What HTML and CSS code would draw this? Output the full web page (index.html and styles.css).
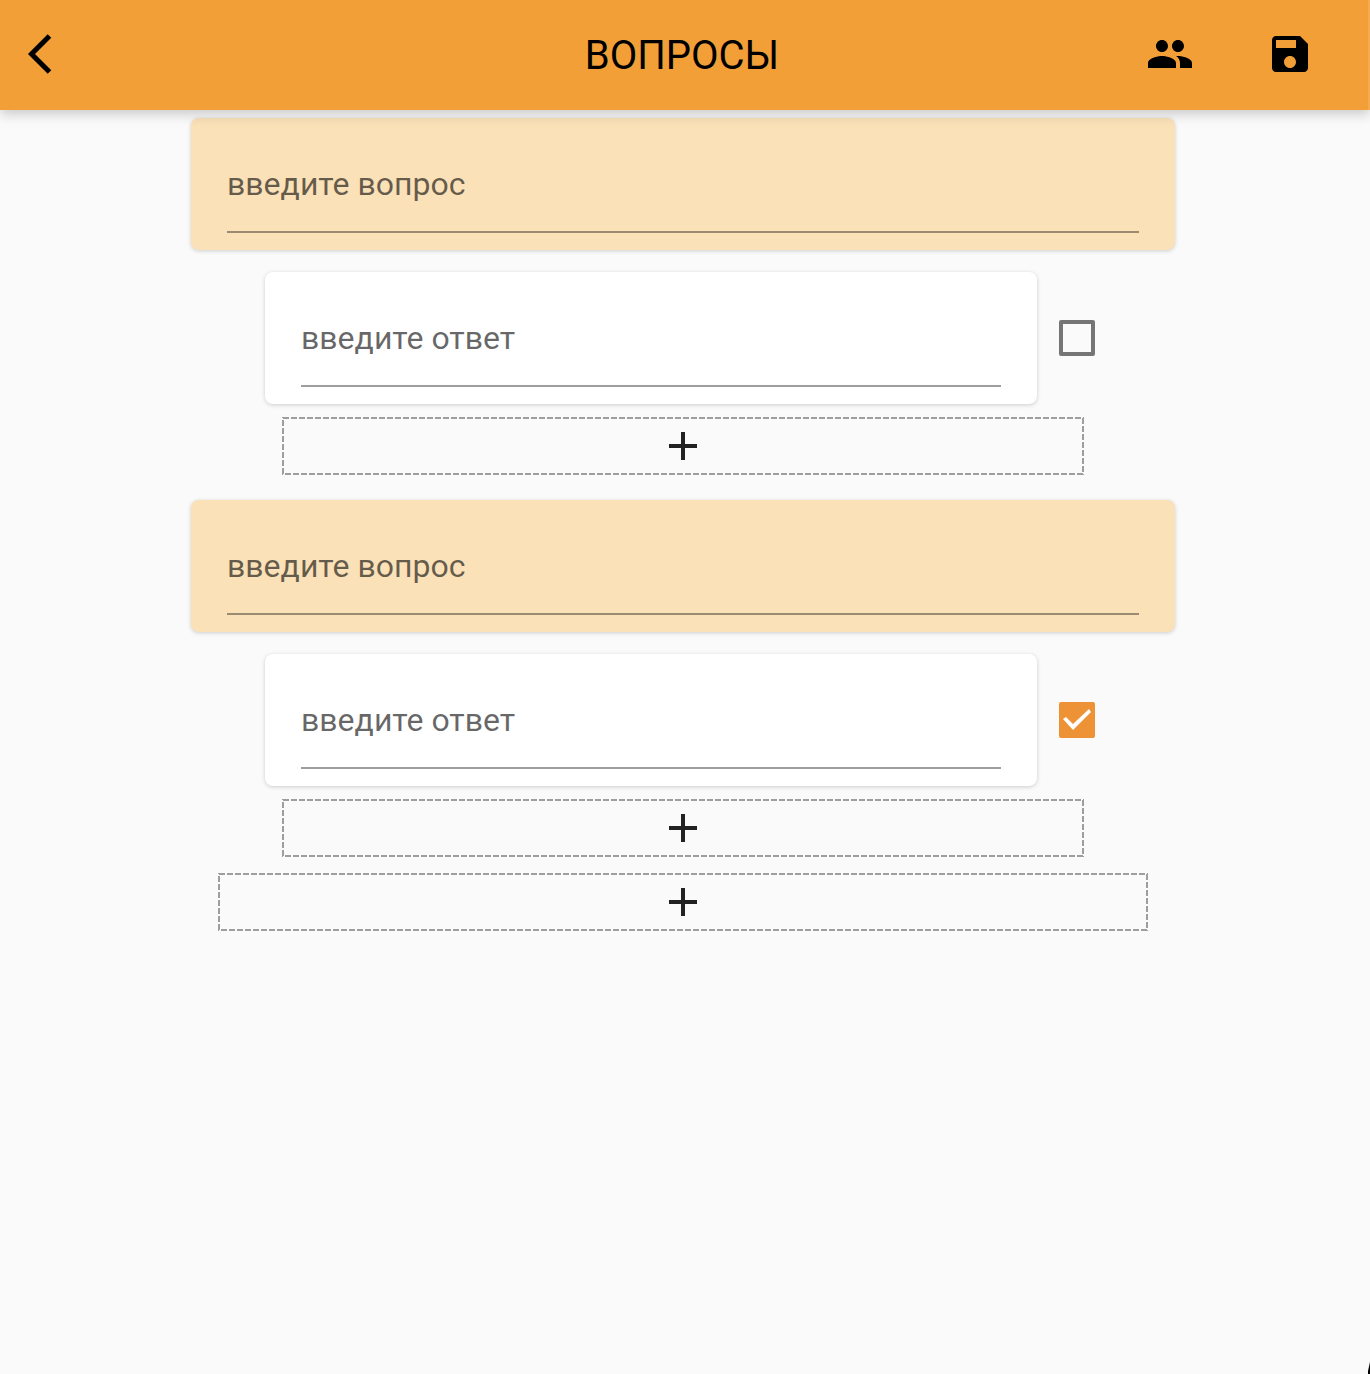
FILE: index.html
```html
<!DOCTYPE html>
<html lang="ru">
<head>
  <meta charset="utf-8">
  <meta name="viewport" content="width=device-width, initial-scale=1">
  <title>Вопросы</title>
  <link rel="stylesheet" href="styles.css">
</head>
<body>
  <header class="app-bar">
    <button class="icon-button back" type="button" aria-label="Назад">
      <svg class="icon" viewBox="0 0 48 48" aria-hidden="true"><path d="M33.5 6 15.5 24l18 18" fill="none" stroke="currentColor" stroke-width="5"/></svg>
    </button>
    <h1 class="title">ВОПРОСЫ</h1>
    <div class="actions">
      <button class="icon-button" type="button" aria-label="Участники">
        <svg class="icon" viewBox="0 0 24 24" fill="currentColor" aria-hidden="true"><path d="M16 11c1.66 0 2.99-1.34 2.99-3S17.66 5 16 5c-1.66 0-3 1.34-3 3s1.34 3 3 3zm-8 0c1.66 0 2.99-1.34 2.99-3S9.66 5 8 5C6.34 5 5 6.34 5 8s1.34 3 3 3zm0 2c-2.33 0-7 1.17-7 3.5V19h14v-2.500c0-2.330-4.670-3.500-7-3.500zm8 0c-.29 0-.62.02-.97.05 1.160.84 1.970 1.970 1.970 3.450V19h6v-2.500c0-2.330-4.670-3.500-7-3.500z"/></svg>
      </button>
      <button class="icon-button" type="button" aria-label="Сохранить">
        <svg class="icon" viewBox="0 0 24 24" fill="currentColor" aria-hidden="true"><path d="M17 3H5c-1.110 0-2 .9-2 2v14c0 1.100.89 2 2 2h14c1.100 0 2-.9 2-2V7l-4-4zm-5 16c-1.660 0-3-1.340-3-3s1.340-3 3-3 3 1.340 3 3-1.340 3-3 3zm3-10H5V5h10v4z"/></svg>
      </button>
    </div>
  </header>

  <main class="page">
    <form class="questions">
      <section class="question">
        <div class="card card-question">
          <input class="field" type="text" placeholder="введите вопрос" aria-label="Вопрос 1">
        </div>
        <div class="answer">
          <div class="card">
            <input class="field" type="text" placeholder="введите ответ" aria-label="Ответ на вопрос 1">
          </div>
          <input class="check" type="checkbox" aria-label="Верный ответ на вопрос 1">
        </div>
        <button class="add add-answer" type="button" aria-label="Добавить ответ">
          <svg class="icon" viewBox="0 0 24 24" fill="currentColor" aria-hidden="true"><path d="M19 13h-6v6h-2v-6H5v-2h6V5h2v6h6v2z"/></svg>
        </button>
      </section>

      <section class="question">
        <div class="card card-question">
          <input class="field" type="text" placeholder="введите вопрос" aria-label="Вопрос 2">
        </div>
        <div class="answer">
          <div class="card">
            <input class="field" type="text" placeholder="введите ответ" aria-label="Ответ на вопрос 2">
          </div>
          <input class="check" type="checkbox" checked aria-label="Верный ответ на вопрос 2">
        </div>
        <button class="add add-answer" type="button" aria-label="Добавить ответ">
          <svg class="icon" viewBox="0 0 24 24" fill="currentColor" aria-hidden="true"><path d="M19 13h-6v6h-2v-6H5v-2h6V5h2v6h6v2z"/></svg>
        </button>
      </section>

      <button class="add add-question" type="button" aria-label="Добавить вопрос">
        <svg class="icon" viewBox="0 0 24 24" fill="currentColor" aria-hidden="true"><path d="M19 13h-6v6h-2v-6H5v-2h6V5h2v6h6v2z"/></svg>
      </button>
    </form>
  </main>
  <svg class="corner" viewBox="0 0 2 12" aria-hidden="true"><path d="M2 0v12H0V9z"/></svg>
</body>
</html>
```

FILE: styles.css
```css
* {
  box-sizing: border-box;
}

body {
  margin: 0;
  min-height: 100vh;
  background: #fafafa;
  font-family: Roboto, sans-serif;
  color: #000;
}

button {
  padding: 0;
  border: 0;
  background: none;
  color: inherit;
  cursor: pointer;
}

.icon {
  display: block;
  width: 48px;
  height: 48px;
}

/* App bar */
.app-bar {
  position: relative;
  z-index: 1;
  display: grid;
  grid-template-columns: 1fr auto 1fr;
  align-items: center;
  height: 110px;
  padding: 0 4px 2px 0;
  border-right: 2px solid #f4ab52;
  background: #f29f38;
  box-shadow: 0 4px 12px rgba(0, 0, 0, 0.2);
}

.icon-button {
  display: grid;
  place-items: center;
  width: 96px;
  height: 96px;
}

.back {
  width: 80px;
}

.title {
  margin: 0;
  padding-top: 4px;
  font-size: 40px;
  font-weight: 400;
  line-height: 48px;
}

.actions {
  display: flex;
  justify-content: flex-end;
  gap: 24px;
  padding-right: 26px;
}

/* Question list */
.page {
  padding: 8px 20px 32px 16px;
}

.questions {
  display: flex;
  flex-direction: column;
  max-width: 984px;
  margin: 0 auto;
}

.question {
  display: flex;
  flex-direction: column;
  margin-bottom: 25px;
}

.question:last-of-type {
  margin-bottom: 16px;
}

.card {
  flex: 1;
  height: 132px;
  padding: 34px 36px 0;
  border-radius: 8px;
  background: #fff;
  box-shadow: 0 1px 4px rgba(0, 0, 0, 0.18);
}

.card-question {
  flex: none;
  background: #fae1b8;
}

.field {
  display: block;
  width: 100%;
  height: 81px;
  padding: 0 0 16px;
  border: 0;
  border-bottom: 2px solid rgba(0, 0, 0, 0.38);
  border-radius: 0;
  outline: 0;
  background: none;
  font: 400 32px Roboto, sans-serif;
  color: #212121;
}

.field::placeholder {
  color: rgba(0, 0, 0, 0.6);
  opacity: 1;
}

.answer {
  display: flex;
  align-items: center;
  gap: 22px;
  margin: 22px 80px 13px 74px;
}

.check {
  display: grid;
  flex: none;
  width: 36px;
  height: 36px;
  margin: 0;
  border: 4px solid #757575;
  border-radius: 2px;
  appearance: none;
}

.check:checked {
  border: 0;
  background: #ed9235;
}

.check:checked::before {
  content: "";
  background: #fff;
  clip-path: polygon(4px 17px, 7px 15px, 14px 22px, 30px 7px, 32px 10px, 14px 28px);
}

/* Dashed outline: 6px dashes with 2px gaps */
.add {
  display: grid;
  place-items: center;
  height: 58px;
  color: #212121;
  background:
    linear-gradient(90deg, #9e9e9e 6px, transparent 6px) 1px 0 / 8px 2px repeat-x,
    linear-gradient(90deg, transparent 2px, #9e9e9e 2px) 1px 100% / 8px 2px repeat-x,
    linear-gradient(#9e9e9e 6px, transparent 6px) 100% 1px / 2px 8px repeat-y,
    linear-gradient(transparent 2px, #9e9e9e 2px) 0 1px / 2px 8px repeat-y;
}

.add-answer {
  margin: 0 91px;
}

.add-question {
  margin: 0 27px;
}

.corner {
  position: fixed;
  right: 0;
  bottom: 0;
  width: 2px;
  height: 12px;
}
```
